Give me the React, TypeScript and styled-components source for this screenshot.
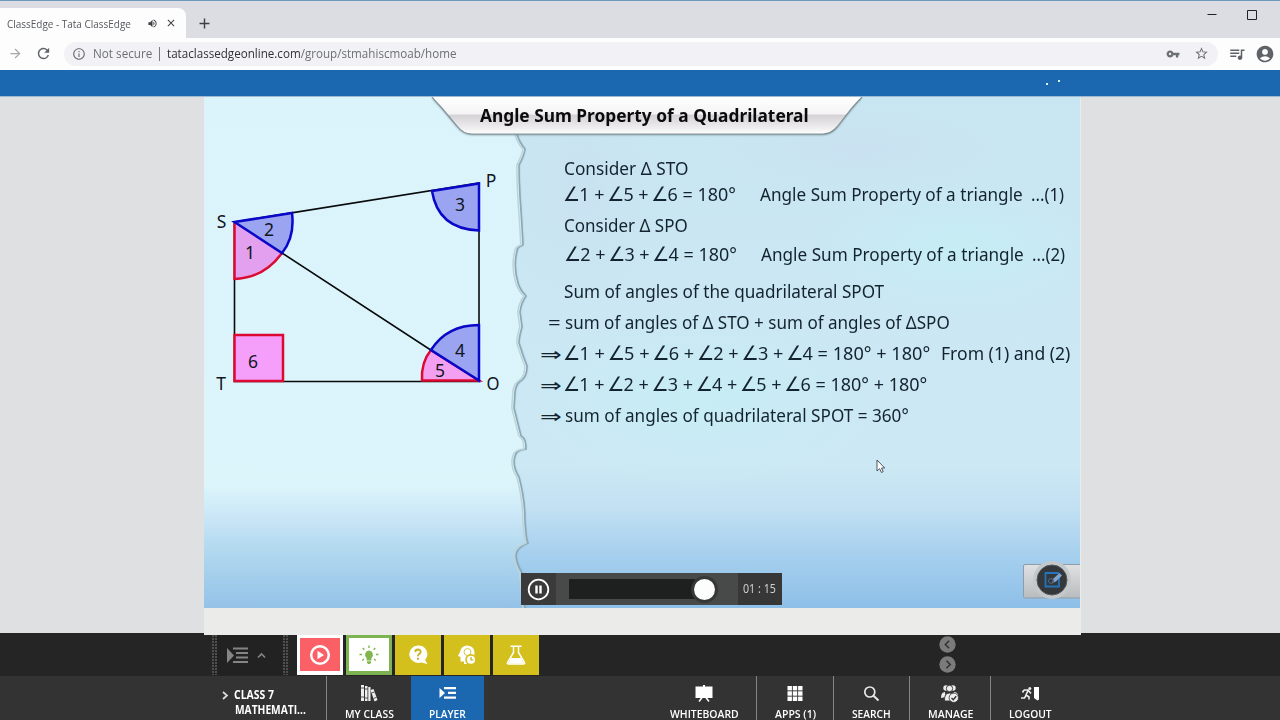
import React, { useLayoutEffect, useRef, useState } from 'react';
import styled, { createGlobalStyle, css } from 'styled-components';
import {
  MdRefresh, MdArrowForward, MdInfoOutline, MdVpnKey, MdStarBorder, MdQueueMusic,
  MdAccountCircle, MdVolumeUp, MdClose, MdAdd,
} from 'react-icons/md';

const GlobalStyle = createGlobalStyle`
  * { box-sizing: border-box; }
  body { margin: 0; width: 1280px; height: 720px; overflow: hidden; background: #dfe0e2; }
`;

const Page = styled.div`
  width: 1280px;
  height: 720px;
  display: flex;
  flex-direction: column;
  overflow: hidden;
  font-family: 'Open Sans', 'Noto Sans', sans-serif;
`;

/* Text condensed or widened horizontally so that it fills a given width. */
const FitBox = styled.span<{ $w: number; $ml?: number }>`
  display: block;
  flex: none;
  width: ${p => p.$w}px;
  margin-left: ${p => p.$ml ?? 0}px;
  white-space: pre;
`;
const FitText = styled.span`
  display: inline-block;
  transform-origin: 0 50%;
`;
function Fit({ w, ml, children }: { w: number; ml?: number; children: React.ReactNode }) {
  const ref = useRef<HTMLSpanElement>(null);
  const [scale, setScale] = useState(1);
  useLayoutEffect(() => {
    if (ref.current) setScale(w / ref.current.offsetWidth);
  }, [w]);
  return (
    <FitBox $w={w} $ml={ml}>
      <FitText ref={ref} style={{ transform: `scaleX(${scale})` }}>{children}</FitText>
    </FitBox>
  );
}

/* Browser chrome */
const TabStrip = styled.div`
  height: 38px;
  flex: none;
  display: flex;
  align-items: flex-end;
  border-top: 1px solid #6f9abd;
  background: #dcdde2;
`;
const Tab = styled.div`
  width: 186px;
  height: 30px;
  display: flex;
  align-items: center;
  padding-left: 7px;
  border-radius: 0 8px 0 0;
  background: #fdfdfe;
  color: #55585c;
  font-size: 11px;
  svg { flex: none; }
`;
const TabIcons = styled.div`
  display: flex;
  align-items: center;
  gap: 7px;
  margin-left: 16px;
  color: #3f4246;
`;
const NewTab = styled.div`
  width: 37px;
  height: 30px;
  display: flex;
  align-items: center;
  justify-content: center;
  color: #3c3f43;
`;
const WindowButtons = styled.div`
  align-self: flex-start;
  margin: 7px 23px 0 auto;
  display: flex;
  gap: 30px;
  svg { display: block; }
`;
const AddressRow = styled.div`
  height: 32px;
  flex: none;
  display: flex;
  align-items: center;
  padding: 0 0 1px 8px;
  background: #fdfdfe;
  color: #5f6368;
  svg { flex: none; }
`;
const Reload = styled.div`
  margin-left: 12px;
  display: flex;
`;
const Account = styled.div`
  margin-left: 9px;
  display: flex;
`;
const Omnibox = styled.div`
  width: 1154px;
  height: 24px;
  flex: none;
  margin: 0 10px 0 12px;
  padding: 0 9px 0 8px;
  display: flex;
  align-items: center;
  border-radius: 12px;
  background: #f2f2f6;
  font-size: 12.5px;
  color: #6c6f74;
`;
const Separator = styled.i`
  width: 1px;
  height: 14px;
  margin: 0 7px;
  background: #77797d;
`;
const Host = styled.b`
  font-weight: 400;
  color: #303236;
`;
const OmniIcons = styled.div`
  margin-left: auto;
  display: flex;
  align-items: center;
  gap: 14px;
`;
const BlueHeader = styled.div`
  height: 27px;
  flex: none;
  background: #1b67b0;
  border-bottom: 1px solid #9db9d4;
  svg { display: block; margin-left: 1044px; }
`;

/* Lesson slide */
const Stage = styled.div`
  height: 536px;
  flex: none;
  padding: 0 199px 0 204px;
  background: #dfe0e2;
`;
const SlideColumn = styled.div`
  width: 877px;
  height: 536px;
  background: #ebebea;
`;
const Slide = styled.div`
  position: relative;
  width: 876px;
  height: 511px;
  font-family: 'Noto Sans', sans-serif;
`;
const Backdrop = styled.svg`
  position: absolute;
  left: 0;
  top: 0;
`;
const SlideBody = styled.div`
  position: relative;
  height: 100%;
  display: flex;
  flex-direction: column;
`;
const Title = styled.h1`
  margin: 5px 0 0 276px;
  height: 27px;
  line-height: 27px;
  font-size: 18px;
  font-weight: 700;
  color: #0b0b0d;
`;
const Proof = styled.div`
  padding: 26px 0 0 338px;
  height: 444px;
  color: #14242e;
  font-size: 18.8px;
`;
const Line = styled.div<{ $before?: number }>`
  display: flex;
  height: 26px;
  line-height: 26px;
  margin-top: ${p => p.$before ?? 0}px;
`;
const Lead = styled.span`
  width: 23px;
  flex: none;
  white-space: nowrap;
`;
const Implies = styled.span`
  display: inline-block;
  margin-left: -2px;
  font: 26px/26px 'DejaVu Sans', sans-serif;
  transform: scaleY(0.72) translateY(1px);
  transform-origin: 50% 55%;
`;
const AngleMark = styled.span`
  margin: 0 -1px 0 -2px;
  font: 20px/20px 'DejaVu Sans', sans-serif;
`;
const Player = styled.div`
  width: 261px;
  height: 32px;
  margin-left: 317px;
  display: flex;
  background: #484949;
`;
const PauseButton = styled.div`
  width: 35px;
  background: #3a3a3b;
  svg { display: block; margin: 5px 0 0 6px; }
`;
const TrackArea = styled.div`
  flex: 1;
  display: flex;
  align-items: center;
  padding-left: 13px;
`;
const Track = styled.div`
  width: 146px;
  height: 20px;
  display: flex;
  justify-content: flex-end;
  align-items: center;
  background: linear-gradient(90deg, #1e1f1f 0 126px, #484949 126px);
`;
const Knob = styled.div`
  width: 21px;
  height: 21px;
  flex: none;
  border-radius: 50%;
  background: #fdfdfd;
  box-shadow: 0 0 0 3px #363737;
`;
const Time = styled.div`
  width: 44px;
  padding-left: 5px;
  background: #373738;
  color: #cfd0d0;
  font-size: 12px;
  line-height: 31px;
`;
const NoteTab = styled.svg`
  position: absolute;
  left: 816px;
  top: 460px;
`;
const Pointer = styled.svg`
  position: absolute;
  left: 672px;
  top: 362px;
`;

/* Bottom bars */
const ToolBar = styled.div`
  position: relative;
  height: 43px;
  flex: none;
  display: flex;
  padding: 2px 0 1px 212px;
  background: #252525;
`;
const Ledge = styled.div`
  position: absolute;
  left: 204px;
  top: 0;
  width: 877px;
  height: 2px;
  background: #ebebea;
`;
const Grip = styled.div`
  width: 5px;
  height: 40px;
  background-image: radial-gradient(circle at 1px 1px, #505050 0.7px, transparent 1px);
  background-size: 3px 3px;
`;
const ListToggle = styled.div`
  width: 66px;
  height: 40px;
  display: flex;
  align-items: center;
  gap: 9px;
  padding-left: 10px;
  background: #222223;
  color: #858585;
`;
const Tools = styled.div`
  display: flex;
  gap: 3px;
  margin-left: 9px;
`;
const toolLook = {
  red: css`background: #fb6067; border: 3px solid #fff; border-width: 3px 3px 4px;`,
  green: css`background: #fff; border: 3px solid #7eb352; border-width: 3px 3px 4px;`,
  yellow: css`background: #d4c01d;`,
};
const Tool = styled.div<{ $look: keyof typeof toolLook }>`
  width: 46px;
  height: 40px;
  display: flex;
  align-items: center;
  justify-content: center;
  ${p => toolLook[p.$look]}
  svg { flex: none; }
`;
const Pager = styled.div`
  display: flex;
  flex-direction: column;
  gap: 3px;
  margin: 1px 0 0 400px;
  svg { display: block; }
`;
const NavBar = styled.div`
  height: 44px;
  flex: none;
  display: flex;
  background: #333334;
  color: #fff;
`;
const ClassPick = styled.div`
  width: 326px;
  padding: 12px 0 0 222px;
  display: flex;
  font-size: 11.5px;
  font-weight: 700;
  line-height: 14.5px;
  svg { flex: none; margin: 3px 5px 0 0; }
`;
const NavItem = styled.div<{ $w: number; $active?: boolean; $rule?: boolean }>`
  width: ${p => p.$w}px;
  height: 44px;
  flex: none;
  display: flex;
  flex-direction: column;
  align-items: center;
  padding-top: 8px;
  border-left: ${p => (p.$rule ? '1px solid #858585' : '0')};
  background: ${p => (p.$active ? '#1b67b0' : 'transparent')};
  font-size: 11px;
  font-weight: 600;
  line-height: 14px;
  svg { flex: none; margin-bottom: 4px; }
`;
const Spacer = styled.div`
  width: 168px;
`;

const TORN = 'L517,134 Q519,142 525,149 Q524,156 519,165 Q519,180 520,197 Q522,225 523,245 Q517,247 517,251 Q513,266 518,283 Q520,290 526,296 Q521,303 520,312 L522,327 Q519,337 519,343 Q523,356 527,366 Q527,376 522,380 Q516,383 515,392 L514,408 Q519,428 521,436 Q526,438 526,449 Q516,450 515,456 Q512,466 519,477 Q525,500 525,520 Q526,540 528,543 Q517,547 516,555 Q516,563 522,573 L525,608';
const BANNER = 'M432,97 Q436,102 441,107 L457,126 Q463,134 472,134 L823,134 Q831,134 837,127 L852,108 Q858,101 862,97 Z';

function SlideArt() {
  return (
    <Backdrop width="876" height="511" viewBox="204 97 876 511">
      <defs>
        <linearGradient id="paper" x1="0" y1="97" x2="0" y2="608" gradientUnits="userSpaceOnUse">
          <stop offset="0" stopColor="#dbf3fb" /><stop offset="0.76" stopColor="#dcf5fb" />
          <stop offset="0.82" stopColor="#cbe7f7" /><stop offset="0.88" stopColor="#b3daef" />
          <stop offset="1" stopColor="#94c2e8" />
        </linearGradient>
        <linearGradient id="sky" x1="0" y1="0" x2="0" y2="1">
          <stop offset="0" stopColor="#c8e6f2" /><stop offset="0.72" stopColor="#cce8f4" />
          <stop offset="0.8" stopColor="#c3e1f3" /><stop offset="0.9" stopColor="#a5cfee" />
          <stop offset="1" stopColor="#8ebfe8" />
        </linearGradient>
        <linearGradient id="metal" x1="0" y1="0" x2="0" y2="1">
          <stop offset="0" stopColor="#ffffff" /><stop offset="0.45" stopColor="#f5f4f5" />
          <stop offset="0.5" stopColor="#d5d3d5" /><stop offset="0.8" stopColor="#eceaec" />
          <stop offset="1" stopColor="#ffffff" />
        </linearGradient>
        <radialGradient id="glow"><stop offset="0" stopColor="#c5f0f5" stopOpacity="0.65" /><stop offset="1" stopColor="#c5f0f5" stopOpacity="0" /></radialGradient>
        <radialGradient id="haze"><stop offset="0" stopColor="#cadff0" stopOpacity="0.6" /><stop offset="1" stopColor="#cadff0" stopOpacity="0" /></radialGradient>
        <filter id="soft"><feGaussianBlur stdDeviation="1.2" /></filter>
      </defs>
      <rect x="204" y="97" width="876" height="511" fill="url(#sky)" />
      <ellipse cx="960" cy="250" rx="150" ry="70" fill="url(#glow)" />
      <ellipse cx="700" cy="400" rx="180" ry="90" fill="url(#glow)" />
      <ellipse cx="860" cy="150" rx="170" ry="50" fill="url(#haze)" />
      <ellipse cx="580" cy="190" rx="90" ry="110" fill="url(#haze)" />
      <path d={`M204,97 L517,97 ${TORN} L204,608 Z`} fill="#5d8592" filter="url(#soft)" opacity="0.75" />
      <path d={`M200,90 L516,90 ${TORN} L525,612 L200,612 Z`} fill="url(#paper)" stroke="#8ba9b4" strokeWidth="1.6" />
      <path d={`M515,97 ${TORN}`} fill="none" stroke="#bed3da" strokeWidth="1.5" transform="translate(-2.2 0)" />
      <path d={BANNER} fill="#6c8288" filter="url(#soft)" transform="translate(0 .8)" />
      <path d={BANNER} fill="url(#metal)" />
      <path d="M432,97 Q436,102 441,107 L457,126 Q463,134 472,134 L823,134 Q831,134 837,127 L852,108 Q858,101 862,97" fill="none" stroke="#839397" strokeWidth="1.200" />
      <path d="M234.500,222 L479,183 V381.500 H234.500 Z M234.500,222 L479,381.500" fill="none" stroke="#080a0c" strokeWidth="1.600" />
      <g strokeWidth="2.500" strokeLinejoin="miter">
        <path d="M234.500,222 L282,253 Q264,278 234.500,279 Z" fill="#e2a0ee" />
        <path d="M282,253 Q264,278 234.500,279 V222" fill="none" stroke="#dc0a30" />
        <path d="M234.500,222 L292,213 Q295,237 282,253 Z" fill="#9aa4f0" stroke="#0907c8" />
        <path d="M479,183.500 L432,191 Q438,229 479,230.500 Z" fill="#9aa4f0" stroke="#0907c8" />
        <path d="M479,380.500 L431,350 Q421,362 422,380.500 Z" fill="#f3a0f1" stroke="#dc0a30" />
        <path d="M479,380.500 V325 Q447,325 431,350 Z" fill="#9aa4f0" stroke="#0907c8" />
        <rect x="234.500" y="335" width="48.500" height="46" fill="#f59ffb" stroke="#dc0a30" />
      </g>
      <g fontSize="17.500" fill="#11151c" textAnchor="middle" fontFamily="'Noto Sans', sans-serif">
        <text x="221.500" y="228">S</text><text x="491" y="187">P</text>
        <text x="221" y="390">T</text><text x="493" y="390" textLength="13" lengthAdjust="spacingAndGlyphs">O</text>
        <text x="250" y="259">1</text><text x="269" y="236">2</text>
        <text x="460" y="211">3</text><text x="460" y="357">4</text>
        <text x="440" y="377">5</text><text x="253" y="368">6</text>
      </g>
    </Backdrop>
  );
}

function Sum({ text }: { text: string }) {
  return (
    <>
      {text.split(/(∠)/).map((part, i) => (part === '∠' ? <AngleMark key={i}>∠</AngleMark> : part))}
    </>
  );
}

function LessonSlide() {
  return (
    <Slide>
      <SlideArt />
      <SlideBody>
        <Title><Fit w={329}>Angle Sum Property of a Quadrilateral</Fit></Title>
        <Proof>
          <Line><Fit ml={22} w={124}>Consider Δ STO</Fit></Line>
          <Line>
            <Fit ml={23} w={171}><Sum text="∠1 + ∠5 + ∠6 = 180°" /></Fit>
            <Fit ml={24} w={263}>Angle Sum Property of a triangle</Fit>
            <Fit ml={8} w={33}>...(1)</Fit>
          </Line>
          <Line $before={5}><Fit ml={22} w={124}>Consider Δ SPO</Fit></Line>
          <Line $before={3}>
            <Fit ml={24} w={171}><Sum text="∠2 + ∠3 + ∠4 = 180°" /></Fit>
            <Fit ml={24} w={263}>Angle Sum Property of a triangle</Fit>
            <Fit ml={8} w={33}>...(2)</Fit>
          </Line>
          <Line $before={11}><Fit ml={22} w={320}>Sum of angles of the quadrilateral SPOT</Fit></Line>
          <Line $before={5}>
            <Fit ml={6} w={13}>=</Fit>
            <Fit ml={4} w={385}>sum of angles of Δ STO + sum of angles of ΔSPO</Fit>
          </Line>
          <Line $before={5}>
            <Lead><Implies>⇒</Implies></Lead>
            <Fit w={365}><Sum text="∠1 + ∠5 + ∠6 + ∠2 + ∠3 + ∠4 = 180° + 180°" /></Fit>
            <Fit ml={11} w={129}>From (1) and (2)</Fit>
          </Line>
          <Line $before={5}>
            <Lead><Implies>⇒</Implies></Lead>
            <Fit w={362}><Sum text="∠1 + ∠2 + ∠3 + ∠4 + ∠5 + ∠6 = 180° + 180°" /></Fit>
          </Line>
          <Line $before={5}>
            <Lead><Implies>⇒</Implies></Lead>
            <Fit w={344}>sum of angles of quadrilateral SPOT = 360°</Fit>
          </Line>
        </Proof>
        <Player>
          <PauseButton>
            <svg width="23" height="23" viewBox="0 0 23 23" fill="none" stroke="#fff">
              <circle cx="11.500" cy="11.500" r="9.800" strokeWidth="1.800" />
              <path d="M9.500,7.500 V15.500 M13.500,7.500 V15.500" strokeWidth="2.400" />
            </svg>
          </PauseButton>
          <TrackArea><Track><Knob /></Track></TrackArea>
          <Time><Fit w={33}>01 : 15</Fit></Time>
        </Player>
      </SlideBody>
      <NoteTab width="60" height="48" viewBox="1020 557 60 48">
        <defs><linearGradient id="tab" x1="0" y1="0" x2="0" y2="1"><stop offset="0" stopColor="#dfe1e2" /><stop offset="1" stopColor="#b9bcbe" /></linearGradient></defs>
        <rect x="1023.500" y="564.500" width="60" height="33.500" rx="1.500" fill="url(#tab)" stroke="#8d9daa" />
        <circle cx="1052" cy="580" r="19" fill="#c3c8cb" />
        <circle cx="1052" cy="580" r="15" fill="#35383b" stroke="#56585a" strokeWidth="1" />
        <path d="M1059,576 V586.500 H1045.500 V573 H1059" fill="none" stroke="#2473bd" strokeWidth="1.800" />
        <path d="M1052,583 L1053.500,578.500 L1059.500,573 L1062,575.500 L1056,581.500 Z" fill="#7fa3c9" />
        <circle cx="1051" cy="581" r="2.500" fill="none" stroke="#4b6a8b" />
      </NoteTab>
      <Pointer width="10" height="15" viewBox="0 0 10 15"><path d="M1,1 V12 L3.600,9.700 L5.500,13.500 L7.200,12.600 L5.500,9 H8.700 Z" fill="#fff" stroke="#3b444b" strokeWidth="0.900" /></Pointer>
    </Slide>
  );
}

function ActivityBar() {
  return (
    <ToolBar>
      <Ledge />
      <Grip />
      <ListToggle>
        <svg width="21" height="17" viewBox="0 0 21 17" fill="currentColor">
          <path d="M0,1 L7,8.500 L0,16 Z M6,0.500 H21 V2.500 H6 Z M9,5 H21 V7 H9 Z M9,9.500 H21 V11.500 H9 Z M6,14 H21 V16 H6 Z" />
        </svg>
        <svg width="9" height="7" viewBox="0 0 9 7"><path d="M1,5.500 L4.500,2 L8,5.500" fill="none" stroke="currentColor" strokeWidth="1.700" /></svg>
      </ListToggle>
      <Grip />
      <Tools>
        <Tool $look="red">
          <svg width="22" height="22" viewBox="0 0 22 22"><circle cx="11" cy="11" r="8.800" fill="none" stroke="#fff" strokeWidth="2.500" /><path d="M8.500,6.800 L15,11 L8.500,15.200 Z" fill="#fff" /></svg>
        </Tool>
        <Tool $look="green">
          <svg width="20" height="20" viewBox="0 0 20 20"><path d="M10,5.500 A4.300,4.300 0 0 1 12.500,13 L12.300,15.500 H7.700 L7.500,13 A4.300,4.300 0 0 1 10,5.500 Z M8,16.200 H12 V17.800 L11,19 H9 L8,17.800 Z" fill="#80b64b" /><path d="M10,0.500 V3 M3.800,3 L5.300,4.700 M16.200,3 L14.700,4.700 M0.500,9.500 H3 M17,9.500 H19.500 M3.300,15.500 L4.900,14 M16.700,15.500 L15.100,14" stroke="#80b64b" strokeWidth="1.400" /></svg>
        </Tool>
        <Tool $look="yellow">
          <svg width="20" height="20" viewBox="0 0 20 20"><path d="M10,0.500 A9,8.700 0 0 1 17,15 L19.500,19 L13,17.500 A9,8.700 0 1 1 10,0.500 Z" fill="#fff" /><path d="M7.300,7 Q7.300,4.500 10,4.500 Q12.700,4.600 12.600,6.800 Q12.500,8 11.200,9 Q10,9.700 10,11.200 M10,12.800 V14.800" fill="none" stroke="#c8b51d" strokeWidth="1.900" /></svg>
        </Tool>
        <Tool $look="yellow">
          <svg width="20" height="21" viewBox="0 0 20 21"><path d="M3,7 Q4,0.500 10.500,0.500 Q17.500,1 17.500,8 L17,13 L12,19 H7 V16.500 H3.500 V12 L1,11 Z" fill="#fff" /><circle cx="10.500" cy="7" r="3.500" fill="none" stroke="#d8c74a" strokeWidth="1" /><circle cx="14" cy="14.800" r="4.900" fill="#fff" stroke="#d4c01d" strokeWidth="1.700" /><path d="M14,12 V15 H16.500" fill="none" stroke="#c2ae19" strokeWidth="1.200" /></svg>
        </Tool>
        <Tool $look="yellow">
          <svg width="20" height="20" viewBox="0 0 20 20"><path d="M4.500,1.200 H15.500 M7.500,1 V7.500 L1.500,17.500 Q1,19 2.500,19 H17.500 Q19,19 18.500,17.500 L12.500,7.500 V1" fill="none" stroke="#fff" strokeWidth="1.500" /><path d="M5,13 H15 L18,18.500 H2 Z" fill="#fff" /></svg>
        </Tool>
      </Tools>
      <Pager>
        {['M9.500,4.500 L6,8 L9.500,11.500', 'M7,4.500 L10.500,8 L7,11.500'].map(d => (
          <svg key={d} width="17" height="17" viewBox="0 0 16 16"><circle cx="8" cy="8" r="7.700" fill="#7b7b7b" /><path d={d} fill="none" stroke="#333" strokeWidth="1.500" /></svg>
        ))}
      </Pager>
    </ToolBar>
  );
}

export default function App() {
  return (
    <Page>
      <GlobalStyle />
      <TabStrip>
        <Tab>
          <Fit w={124}>ClassEdge - Tata ClassEdge</Fit>
          <TabIcons><MdVolumeUp size={11} /><MdClose size={12} stroke="currentColor" /></TabIcons>
        </Tab>
        <NewTab><MdAdd size={17} /></NewTab>
        <WindowButtons>
          <svg width="10" height="12" viewBox="0 0 10 12"><path d="M0.500,6.500 H9.500" stroke="#222" /></svg>
          <svg width="10" height="12" viewBox="0 0 10 12"><path d="M0.500,2.500 H9.500 V11.500 H0.500 Z" stroke="#222" fill="none" /></svg>
        </WindowButtons>
      </TabStrip>
      <AddressRow>
        <MdArrowForward size={15} color="#a6a8ab" />
        <Reload><MdRefresh size={17} /></Reload>
        <Omnibox>
          <MdInfoOutline size={14} />
          <Fit ml={7} w={59}>Not secure</Fit>
          <Separator />
          <Fit w={289}><Host>tataclassedgeonline.com</Host>/group/stmahiscmoab/home</Fit>
          <OmniIcons><MdVpnKey size={14} /><MdStarBorder size={15} /></OmniIcons>
        </Omnibox>
        <MdQueueMusic size={18} />
        <Account><MdAccountCircle size={20} /></Account>
      </AddressRow>
      <BlueHeader>
        <svg width="20" height="20"><rect x="2" y="13" width="2" height="2" fill="#d9f6fa" /><rect x="14" y="10" width="2" height="2" fill="#d9f6fa" /></svg>
      </BlueHeader>
      <Stage>
        <SlideColumn><LessonSlide /></SlideColumn>
      </Stage>
      <ActivityBar />
      <NavBar>
        <ClassPick>
          <svg width="7" height="9" viewBox="0 0 7 9"><path d="M1,1 L5,4.500 L1,8" fill="none" stroke="#ddd" strokeWidth="1.700" /></svg>
          <div><Fit w={40}>CLASS 7</Fit><Fit w={71} ml={1}>MATHEMATI...</Fit></div>
        </ClassPick>
        <NavItem $w={85} $rule>
          <svg width="18" height="19" viewBox="0 0 18 19"><g fill="#eee"><rect x="1" y="1" width="3" height="16" /><rect x="5" y="2" width="2.500" height="15" /><rect x="8.300" y="3" width="2.200" height="14" /><path d="M10.500,6 L13.500,5 L17.500,16 L14.500,17.500 Z" /></g><path d="M1,4 H4 M1,13 H4 M5,5 H8 M5,14 H8 M11.500,9 L14.500,8 M13.500,14.500 L16.500,13.300" stroke="#444" strokeWidth="0.900" /></svg>
          <Fit w={49}>MY CLASS</Fit>
        </NavItem>
        <NavItem $w={73} $active>
          <svg width="18" height="19" viewBox="0 0 18 19" fill="#fff"><path d="M0.500,4 L6,9 L0.500,14 Z M5,3 H17 V5.200 H5 Z M9,7.800 H17 V10 H9 Z M5,12.600 H17 V14.800 H5 Z" /></svg>
          <Fit w={37}>PLAYER</Fit>
        </NavItem>
        <Spacer />
        <NavItem $w={104}>
          <svg width="18" height="19" viewBox="0 0 18 19"><path d="M0.500,2.500 H8 V1 H10 V2.500 H17.500 V14 H0.500 Z" fill="#fff" /><path d="M7.500,13 L4,17.500 M10.500,13 L14,17.500" stroke="#fff" strokeWidth="1.500" /></svg>
          <Fit w={69}>WHITEBOARD</Fit>
        </NavItem>
        <NavItem $w={77} $rule>
          <svg width="16" height="19" viewBox="0 0 16 19" fill="#fff">{[0, 1, 2].map(r => [0, 1, 2].map(c => <rect key={`${r}${c}`} x={0.5 + c * 5.3} y={2 + r * 5.3} width="4.400" height="4.400" />))}</svg>
          <Fit w={41}>APPS (1)</Fit>
        </NavItem>
        <NavItem $w={76} $rule>
          <svg width="17" height="19" viewBox="0 0 17 19" fill="none" stroke="#e8e8e8"><circle cx="6.800" cy="8" r="5" strokeWidth="1.700" /><path d="M10.500,11.700 L15.500,16.500" strokeWidth="2" /></svg>
          <Fit w={39}>SEARCH</Fit>
        </NavItem>
        <NavItem $w={81} $rule>
          <svg width="20" height="19" viewBox="0 0 20 19" fill="#eee"><circle cx="6" cy="4" r="2.700" /><circle cx="13" cy="4" r="2.700" /><circle cx="9.500" cy="4.500" r="3.200" stroke="#333" strokeWidth="0.900" /><path d="M1,14 Q1,8 5,8 L5.500,13 Z M18,12 Q18,8 14,8 L12,12 Z" /><path d="M4.500,17 Q4,9 9.500,9 Q13,9 13.500,12 L12,17 Z" stroke="#333" strokeWidth="0.900" /><circle cx="13.800" cy="13.800" r="4.700" stroke="#333" strokeWidth="0.800" /><path d="M11.500,14 L13.300,15.700 L16.200,12.300" fill="none" stroke="#333" strokeWidth="1.400" /></svg>
          <Fit w={45}>MANAGE</Fit>
        </NavItem>
        <NavItem $w={79} $rule>
          <svg width="20" height="19" viewBox="0 0 20 19"><circle cx="9.800" cy="4.500" r="1.500" fill="#eee" /><path d="M4,6 H8 L11,9.500 M8,6.500 L6,11 L9,13 V15.500 M6,11.500 L4.500,14 H1 M4,6 L2.500,8.500" fill="none" stroke="#eee" strokeWidth="1.600" /><path d="M14,3 H19 V15.500 L17.500,16.500 L14,14 Z" fill="#fff" /></svg>
          <Fit w={43}>LOGOUT</Fit>
        </NavItem>
      </NavBar>
    </Page>
  );
}
